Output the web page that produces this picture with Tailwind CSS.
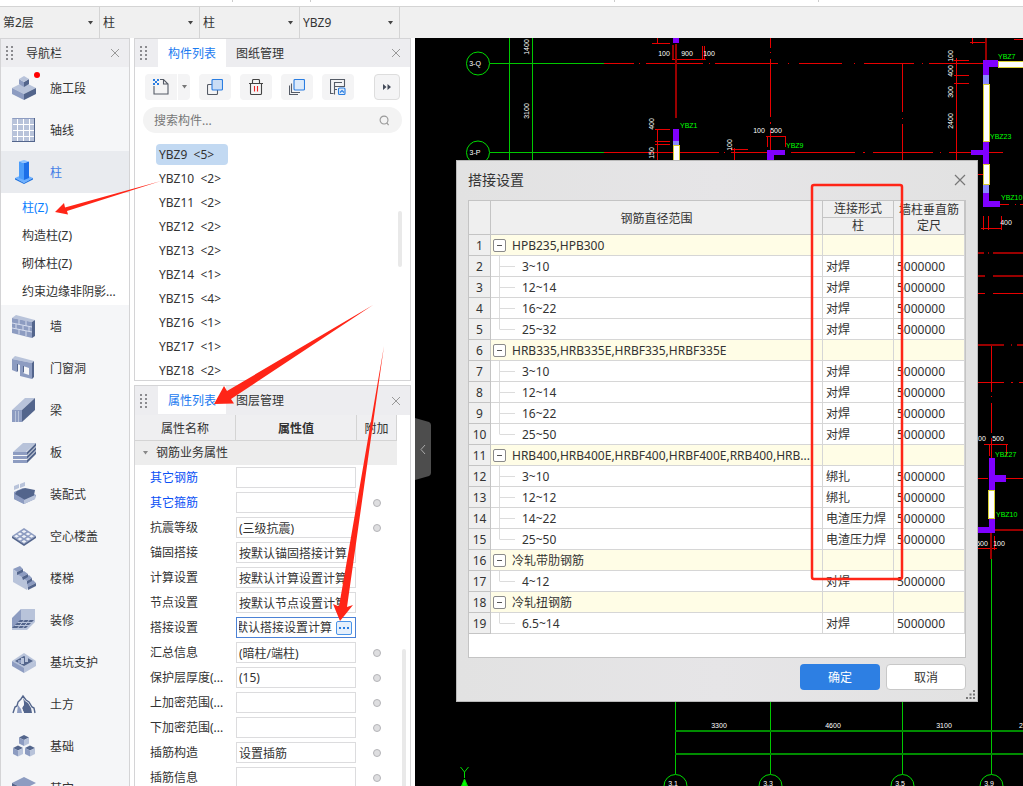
<!DOCTYPE html>
<html lang="zh-CN">
<head>
<meta charset="utf-8">
<title>搭接设置</title>
<script src="https://cdn.jsdelivr.net/npm/@tailwindcss/browser@4"></script>
</head>
<body class="relative flex h-screen flex-col overflow-hidden bg-white font-['Noto_Sans','Noto_Sans_CJK_SC',sans-serif] text-xs leading-5 text-[#333]">

<div class="flex h-1.5 shrink-0">
  <div class="h-0.5 w-[233px] border-r border-[#ccc]"></div>
  <div class="h-0.5 w-[78px] border-r border-[#ccc]"></div>
  <div class="h-0.5 w-[304px] border-r border-[#ccc]"></div>
  <div class="h-0.5 w-[204px] border-r border-[#ccc]"></div>
</div>
<form id="filters" class="flex h-8 shrink-0 border-t border-[#d4d4d4] bg-[#f0f0f0]"></form>

<div class="flex min-h-0 flex-1">
  <nav class="flex w-[130px] shrink-0 flex-col overflow-hidden border border-b-0 border-[#d4d4d6] bg-[#f5f6f8]">
    <header class="flex h-7 shrink-0 items-center bg-[#ededf0] pl-[5px]">
      <svg class="h-4 w-2" viewBox="0 0 8 16" fill="#8b8b8f"><path d="M0 1h2v2H0zM5 1h2v2H5zM0 5h2v2H0zM5 5h2v2H5zM0 9h2v2H0zM5 9h2v2H5zM0 13h2v2H0zM5 13h2v2H5z"/></svg>
      <h2 class="ml-3 flex-1 pt-0.5">导航栏</h2>
      <button type="button" aria-label="关闭导航栏" class="mr-[9px]"><svg class="h-2.5 w-2.5" viewBox="0 0 10 10" fill="none" stroke="#999"><path d="M1 1l8 8M9 1L1 9"/></svg></button>
    </header>
    <ul id="nav"></ul>
  </nav>

  <div class="ml-1 flex w-[277px] shrink-0 flex-col gap-1">
    <section class="flex h-[343px] shrink-0 flex-col overflow-hidden border border-[#d4d4d6]">
      <header class="flex h-7 shrink-0 items-stretch bg-[#ededf0] pl-[5px]">
        <svg class="mr-2.5 h-4 w-2 self-center" viewBox="0 0 8 16" fill="#8b8b8f"><path d="M0 1h2v2H0zM5 1h2v2H5zM0 5h2v2H0zM5 5h2v2H5zM0 9h2v2H0zM5 9h2v2H5zM0 13h2v2H0zM5 13h2v2H5z"/></svg>
        <button type="button" class="w-[68px] bg-white pt-0.5 text-[#1a7af0]">构件列表</button>
        <button type="button" class="w-[68px] pt-0.5">图纸管理</button>
        <button type="button" aria-label="关闭构件列表" class="mr-[9px] ml-auto"><svg class="h-2.5 w-2.5" viewBox="0 0 10 10" fill="none" stroke="#999"><path d="M1 1l8 8M9 1L1 9"/></svg></button>
      </header>
      <div class="mt-[7px] flex h-[26px] shrink-0 pl-2.5">
        <button type="button" aria-label="新建" class="flex w-8 items-center justify-center rounded-l bg-[#f4f4f5]"><svg class="h-[18px] w-[18px]" viewBox="0 0 18 18" fill="none" stroke="#555b66" stroke-width="1.100"><path d="M2 8v8h14V6l-4.500-4.500H8M11.500 1.500V6H16"/><path d="M1 1h2v2H1zM5 1h2v2H5zM3 3h2v2H3zM1 5h2v2H1zM5 5h2v2H5z" fill="#2a7de1" stroke="none"/></svg></button>
        <button type="button" aria-label="新建菜单" class="ml-px flex w-3 items-center justify-center rounded-r bg-[#f4f4f5]"><svg class="h-1 w-[5px]" viewBox="0 0 5 4" fill="#777"><path d="M0 0h5L2.500 3.500z"/></svg></button>
        <button type="button" aria-label="复制" class="ml-[9px] flex w-8 items-center justify-center rounded bg-[#f4f4f5]"><svg class="h-4 w-4" viewBox="0 0 16 16" stroke-width="1.100"><path d="M5 5.500H1.500q-1 0-1 1v8q0 1 1 1h8q1 0 1-1V11" fill="none" stroke="#555b66"/><rect x="5" y=".5" width="10.500" height="10.500" rx="1" fill="#c9ddf5" stroke="#2a7de1"/></svg></button>
        <button type="button" aria-label="删除" class="ml-[9px] flex w-8 items-center justify-center rounded bg-[#f4f4f5]"><svg class="h-4 w-4" viewBox="0 0 16 16" fill="none" stroke="#444" stroke-width="1.100"><path d="M1 4.500h14M4.500 4.500V1.500q0-1 1-1h5q1 0 1 1v3M2.500 4.500v10q0 1 1 1h9q1 0 1-1v-10"/><path d="M6.500 7v5.500M9.500 7v5.500" stroke="#e22"/></svg></button>
        <button type="button" aria-label="层间复制" class="ml-[9px] flex w-8 items-center justify-center rounded bg-[#f4f4f5]"><svg class="h-4 w-4" viewBox="0 0 16 16" fill="none" stroke="#555b66" stroke-width="1.100"><path d="M.500 6.500v9H9M2.500 4.500v9H11"/><rect x="5" y=".5" width="10.500" height="10.500" rx="1" fill="#dceafa" stroke="#2a7de1"/></svg></button>
        <button type="button" aria-label="存档" class="ml-[9px] flex w-8 items-center justify-center rounded bg-[#f4f4f5]"><svg class="h-4 w-4" viewBox="0 0 16 16" fill="none" stroke="#555b66" stroke-width="1.100"><path d="M3.500 14.500H.500V.500h14v7h-10v-4H12M4.500 7.500v8M4.500 10.500H7"/><rect x="8.500" y="9" width="6.500" height="6.500" rx="1" fill="#dceafa" stroke="#2a7de1"/><path d="M10 13.500l2-2 2 2" stroke="#2a7de1"/></svg></button>
        <button type="button" aria-label="更多" class="mr-2.5 ml-auto flex w-[26px] items-center justify-center rounded border border-[#ddd] bg-[#f4f4f5]"><svg class="h-1.5 w-2" viewBox="0 0 8 6" fill="#444b5a"><path d="M0 0l3.500 3L0 6zM4.500 0L8 3 4.500 6z"/></svg></button>
      </div>
      <label class="mx-2 mt-[7px] flex h-[26px] shrink-0 items-center rounded-full bg-[#f3f3f3] pr-3 pl-[11px]">
        <input type="search" aria-label="搜索构件" placeholder="搜索构件..." class="min-w-0 flex-1 bg-transparent pt-0.5 outline-none placeholder:text-[#777]">
        <svg class="h-[11px] w-[11px]" viewBox="0 0 12 12" fill="none" stroke="#999" stroke-width="1.200"><circle cx="5.500" cy="5.500" r="4.300"/><path d="M8.500 8.500l2 2.500"/></svg>
      </label>
      <div class="mt-[9px] flex min-h-0 flex-1 overflow-hidden">
        <ul id="parts" class="flex-1 pl-[21px]"></ul>
        <div class="mt-[69px] mr-2 h-14 w-1 rounded-full bg-[#e9e9e9]"></div>
      </div>
    </section>

    <section class="flex min-h-0 flex-1 flex-col overflow-hidden border border-b-0 border-[#d4d4d6]">
      <header class="flex h-[29px] shrink-0 items-stretch bg-[#ededf0] pl-[5px]">
        <svg class="mr-2.5 h-4 w-2 self-center" viewBox="0 0 8 16" fill="#8b8b8f"><path d="M0 1h2v2H0zM5 1h2v2H5zM0 5h2v2H0zM5 5h2v2H5zM0 9h2v2H0zM5 9h2v2H5zM0 13h2v2H0zM5 13h2v2H5z"/></svg>
        <button type="button" class="mb-px w-[68px] bg-white pt-0.5 text-[#1a7af0]">属性列表</button>
        <button type="button" class="w-[68px]">图层管理</button>
        <button type="button" aria-label="关闭属性列表" class="mr-[9px] ml-auto"><svg class="h-2.5 w-2.5" viewBox="0 0 10 10" fill="none" stroke="#999"><path d="M1 1l8 8M9 1L1 9"/></svg></button>
      </header>
      <div class="flex min-h-0 flex-1 overflow-hidden">
        <table class="w-[262px] shrink-0 table-fixed border-separate border-spacing-0 self-start">
          <colgroup><col class="w-[101px]"><col class="w-[121px]"><col class="w-10"></colgroup>
          <thead><tr class="h-[26px] bg-[#efeff1]">
            <th class="border-r border-b border-[#d4d4d4] p-0 pt-0.5 font-normal">属性名称</th>
            <th class="border-r border-b border-[#d4d4d4] p-0 pt-0.5 font-bold">属性值</th>
            <th class="border-r border-b border-[#d4d4d4] p-0 pt-0.5 font-normal">附加</th></tr></thead>
          <tbody id="props"></tbody>
        </table>
        <div class="mt-[234px] ml-[5px] w-1 rounded-t-full bg-[#e9e9e9]"></div>
      </div>
    </section>
  </div>

  <main class="relative ml-1 min-w-0 flex-1 overflow-hidden bg-black">
    <svg class="h-full w-full font-['Liberation_Sans',sans-serif] text-[7px]" shape-rendering="crispEdges">
      <g transform="translate(-415 -38)" fill="none">
        <g stroke="#00c800">
          <path d="M490 63.500h114M490 152.500h114M509.500 38v124M532.500 38v124M675.500 700v74M770.500 700v74M902.500 700v74M991.500 559v215"/>
          <path d="M675 731h348M675 754h348" stroke="#008c00" stroke-width="2"/>
          <g shape-rendering="auto" stroke="#00dc00"><circle cx="478" cy="63.500" r="11.500"/><circle cx="478" cy="152.500" r="11.500"/><circle cx="675.500" cy="786" r="11.500"/><circle cx="770.500" cy="786" r="11.500"/><circle cx="902.500" cy="786" r="11.500"/><circle cx="991.500" cy="786" r="11.500"/>
          <path d="M460.500 767l4 5 4-5M464.500 772v6"/><path d="M464.500 779l3 7h-6z" fill="#00ff00"/></g>
        </g>
        <g stroke="#e80000">
          <path d="M604 63.500h30m5 0h1m6 0h57m6 0h1m5 0h63m10 0h1m10 0h43m12 0h1m9 0h50m8 0h1m6 0h54M604 152.500h115m5 0h1m6 0h50m10 0h64m8 0h2m8 0h60m7 0h1m8 0h54"/>
          <path d="M770.500 38v10m0 4v1m0 6v58m0 5v2m0 6v20M902.500 64v48m0 6v1m0 5v36M956.500 58v102"/>
          <path d="M657.500 38v6M652 43.500h18M672 59.500h34M673.500 46v14M702.500 46v14M704.500 46v14M657.500 129v31M655 129.500h15M655 141.500h15M655 144.500h15"/>
          <path d="M766 136.500h20M767.500 136v11M785.500 136v11M734.500 148v12M731 149.500h17M954 60.500h15M954 75.500h15M954 83.500h15M970 42.500h16M1014 39.500h9M972 38v6M978 174.500h5"/>
          <path d="M981 228.500h21M983.500 216v14M988.500 216v14M1001.500 216v14M1000 204.500h9m6 0h1m4 0h3"/>
          <path d="M978 293.500h7m8 0h30M978 382.500h26m7 0h2m6 0h4M991.500 345v47m0 4v1m0 6v30m0 5v20M984 444.500h24M989.500 444v12M1006.500 444v12M978 478.500h10M1006 478.500h17M978 548.500h19M994.500 536v14"/>
        </g>
        <g stroke="#990000" stroke-width="2">
          <path d="M676 44v74M673 45v14M986 38v22M991 533v26M978 253h6m4 0h1m4 0h30M978 276h7m8 0h30M978 345h26m7 0h1m5 0h6M995 530h28"/>
        </g>
        <g stroke="none">
          <path fill="#8000ff" d="M673 38h6v5h-6zM673 129h6v12h-6zM767 150h18v5h-11v6h-7zM983 60h15v7h-9v8h-6zM983 141h6v23h-6v-9h-12v-5h12zM983 193h6v8h11v6h-17zM989 458h6v17h11v7h-11v8h-6zM989 518h6v15h-17v-6h11z"/>
          <path fill="#8888ff" d="M673 141h6v4h-6zM983 75h6v9h-6zM983 184h6v9h-6z"/>
          <path fill="#fff" stroke="#d8d030" stroke-width="1" d="M673 145h6v16h-6zM983 84h6v57h-6zM983 164h6v20h-6zM998 61h26v6h-26zM988 490h6v28h-6z"/>
        </g>
        <g fill="#00ff00"><text x="680" y="128">YBZ1</text><text x="786" y="148">YBZ9</text><text x="998" y="59">YBZ7</text><text x="990" y="139">YBZ23</text><text x="1001" y="200">YBZ10</text><text x="995" y="457">YBZ27</text><text x="996" y="517">YBZ10</text></g>
        <g fill="#fff" text-anchor="middle">
          <text x="475" y="66">3-Q</text><text x="475" y="155">3-P</text>
          <text x="664" y="56">100</text><text x="687" y="56">900</text><text x="709" y="56">100</text>
          <text x="759" y="133">100</text><text x="776" y="133">500</text><text x="1006" y="225">400</text><text x="980" y="441">100</text><text x="998" y="441">500</text><text x="982" y="546">500</text><text x="999" y="546">100</text>
          <text x="719" y="728">3300</text><text x="833" y="728">4600</text><text x="944" y="728">3100</text><text x="1021" y="728">2</text>
          <text x="673" y="786">3.1</text><text x="768" y="786">3.3</text><text x="900" y="786">3.5</text><text x="989" y="786">3.9</text>
          <g transform="rotate(-90)"><text x="-47" y="529">1400</text><text x="-111" y="529">3100</text><text x="-124" y="654">400</text><text x="-153" y="654">150</text><text x="-145" y="732">100</text><text x="-56" y="953">100</text><text x="-71" y="953">400</text><text x="-92" y="953">300</text><text x="-121" y="953">2400</text></g>
        </g>
      </g>
    </svg>
    <button type="button" aria-label="收起面板" class="absolute top-[380px] left-0"><svg class="h-[62px] w-4" viewBox="0 0 16 62"><path d="M0 0l14 4q2 1 2 3v48q0 2-2 3L0 62z" fill="#4d4d4d"/><path d="M10 27l-4 4.500 4 4.500" fill="none" stroke="#aaa"/></svg></button>

    <section role="dialog" aria-labelledby="dlg-title" class="absolute top-[122px] left-[41px] flex h-[542px] w-[522px] flex-col border border-[#b9b9b9] bg-[#e3e3e3] bg-linear-to-r from-[#e2e2e2] via-[#e6e5e7] to-[#e2e2e2] px-[11px]">
      <header class="flex h-[39px] shrink-0 items-center justify-between pb-0.5">
        <h1 id="dlg-title" class="text-sm">搭接设置</h1>
        <button type="button" aria-label="关闭"><svg class="h-3 w-3" viewBox="0 0 12 12" fill="none" stroke="#777" stroke-width="1.200"><path d="M1 1l10 10M11 1L1 11"/></svg></button>
      </header>
      <div class="h-[458px] overflow-hidden border border-[#c4c4c4] bg-white">
        <table class="w-full table-fixed border-separate border-spacing-0 leading-4">
          <colgroup><col class="w-[22px]"><col><col class="w-[71px]"><col class="w-[71px]"></colgroup>
          <thead class="bg-[#efefef]">
            <tr class="h-[17px]"><th rowspan="2" class="border-r border-b border-[#c4c4c4] p-0"></th><th rowspan="2" class="border-r border-b border-[#c4c4c4] p-0 pt-0.5 font-normal">钢筋直径范围</th><th class="border-r border-b border-[#c4c4c4] p-0 font-normal">连接形式</th><th rowspan="2" class="border-r border-b border-[#c4c4c4] p-0 font-normal">墙柱垂直筋<br>定尺</th></tr>
            <tr class="h-[17px]"><th class="border-r border-b border-[#c4c4c4] p-0 font-normal">柱</th></tr>
          </thead>
          <tbody id="laps"></tbody>
        </table>
      </div>
      <footer class="mt-1.5 flex justify-end gap-1.5">
        <button type="button" class="h-[26px] w-20 rounded-sm bg-[#2d7fe3] pt-0.5 text-white">确定</button>
        <button type="button" class="h-[26px] w-20 rounded-sm border border-[#c8c8c8] bg-white pt-0.5">取消</button>
      </footer>
      <svg class="absolute right-0.5 bottom-0.5 h-[9px] w-[9px]" viewBox="0 0 9 9" fill="#777"><path d="M7 0h2v2H7zM7 3.500h2v2H7zM7 7h2v2H7zM3.500 3.500h2v2h-2zM3.500 7h2v2h-2zM0 7h2v2H0z"/></svg>
    </section>
  </main>
</div>

<svg class="pointer-events-none absolute inset-0 h-full w-full" fill="#ff2517">
  <path d="M55 212l9-9 1 4.500L161 181 67 211l1 3.500z"/>
  <path d="M214 404l10-18 3 5L373 305 231 399l3 4.500z"/>
  <path d="M340 621l-7-17 6 2.500L384 346 347 607l6-2z"/>
  <rect x="812" y="185" width="90" height="394" rx="2" fill="none" stroke="#ff2517" stroke-width="2.500"/>
</svg>

<script>
const byId = id => document.getElementById(id);

byId('filters').innerHTML = [['楼层','第2层'],['构件类别','柱'],['构件类型','柱'],['构件名称','YBZ9']].map(([n, v]) => `
  <div class="relative w-[100px] border-r border-[#d4d4d4]">
    <select aria-label="${n}" class="h-full w-full appearance-none bg-transparent pl-[3px]"><option>${v}</option></select>
    <svg class="pointer-events-none absolute top-3.5 right-1.5 h-1 w-[5px]" viewBox="0 0 5 4" fill="#444"><path d="M0 0h5L2.500 3.500z"/></svg>
  </div>`).join('');

const L = '#b8c3da', M = '#8d9cc1', D = '#53658c';
const p = (f, d) => `<path fill="${f}" d="${d}"/>`;
const ln = (s, d, w = 1) => `<path fill="none" stroke="${s}" stroke-width="${w}" d="${d}"/>`;
const cube = (x, y) => p(D, `M${x} ${y}l5-2.500 5 2.500-5 2.500z`) + p(M, `M${x} ${y}l5 2.500v6l-5-2.500z`) + p(L, `M${x+10} ${y}l-5 2.500v6l5-2.500z`);
const nav = [
  ['施工段', p(L,'M0 12l12-6 12 6-12 6z')+p(M,'M0 12l12 6v6L0 18z')+p(D,'M24 12l-12 6v6l12-6z')+p(M,'M7 3v5l5 3V6z')+p(D,'M17 3v5l-5 3V6z')+p(L,'M7 3l5-3 5 3-5 3z'), 1],
  ['轴线', p(L,'M0 0h23v24H0z')+ln(M,'M.500.500h22')+ln(D,'M22.500 0v24M0 23.500h23')+ln('#fff','M5.500 1v22M11.500 1v22M17.500 1v22M1 6.500h21M1 12.500h21M1 18.500h21')],
  ['柱', p('#6fb1ff','M3 18l9-4 9 4-9 5z')+p('#1c72e0','M3 18l9 5 9-5v1.500L12 24l-9-4.500z')+p('#4c9dfa','M7 1.500l5 1.500v17l-5-2z')+p('#1c6fe8','M12 3l5-1.500V18l-5 2z')+p('#8cc2ff','M7 1.500L12 0l5 1.500L12 3z')],
  ['墙', p(L,'M0 4l4-3 19 5-3 2z')+p(M,'M0 4l20 4v16L0 19z')+p(D,'M20 8l3-2v16l-3 2z')+ln('#d5dced','M0 9l20 4M0 14l20 4M7 5.500v5M14 7v5M4 10v5M11 11.500v5M17 12.500v5M7 15.500v5M14 17v5')],
  ['门窗洞', p(L,'M0 3l3-3 19 5-2 2z')+`<path fill="${M}" fill-rule="evenodd" d="M0 3l20 4v16L8 20V9L5 8v8l-5-2zM11 10v7l6 2v-7z"/>`+p(D,'M20 7l2-2v16l-2 2zM5 8h1v7l-1 1zM11 10h1v6l-1 1z')],
  ['梁', p(L,'M0 12L13 0h10L10 12z')+p(M,'M0 12h10v12H0z')+p(D,'M10 12L23 0v12L10 24z')+ln(L,'M3.500 13v11M6.500 13v11')],
  ['板', p(L,'M1 12l10-9h13l-10 9z')+p(M,'M1 12h14v3H1zM1 16h14v3H1zM1 20h14v3H1z')+p(D,'M15 12l9-9v3l-9 9zM15 16l9-9v3l-9 9zM15 20l9-9v3l-9 9z')],
  ['装配式', p(M,'M2 10l9-4 13 7-1 4-11 5L2 17z')+p(D,'M5 9l8-3 10 2-1 5 1 1-10 4L3 12z')+p(L,'M2 4l5-2v4L2 8zM8 2l5-2v4L8 6zM12 18l11-5v4l-11 5z')+p(M,'M2 12l10 6v4L2 17z')],
  ['空心楼盖', p(M,'M0 12L12 4l12 8-12 8z')+p(D,'M0 12l12 8 12-8v2l-12 8L0 14z')+p('#eef1f7','M12 6l2.500 1.500L12 9 9.500 7.500zM8 8.500l2.500 1.500L8 11.500 5.500 10zM16 8.500l2.500 1.500-2.500 1.500-2.500-1.500zM4.500 10.800L7 12.300l-2.500 1.500L2 12.300zM12 11l2.500 1.500L12 14l-2.500-1.500zM19.500 10.800l2.500 1.500-2.500 1.500-2.500-1.500zM8 13.500l2.500 1.500L8 16.500 5.500 15zM16 13.500l2.500 1.500-2.500 1.500-2.500-1.500zM12 16l2.500 1.500L12 19l-2.500-1.500z')],
  ['楼梯', p(L,'M1 3v13l14 8 2-4V16z')+p(M,'M1 3l7-3 3 3-6 3zM5 8l7-3 4 3-6 3zM11 12l6-3 3 3-5 3zM15 17l6-3 3 3-8 4z')+p(D,'M5 6l6-3v3l-6 3zM10 11l6-3v3l-5 3zM15 15l5-3v3l-5 3zM16 21l8-4v3l-8 4z')],
  ['装修', p(L,'M9 1h14v11H9z')+p(M,'M0 10l9-9v11l-9 9z')+p(L,'M0 21l9-9h14v2l-8 8H0z')+p(D,'M8 12h14l-2 2H6zM5 15h14l-2 2H3zM2 18h14l-2 2H0z')+ln(L,'M13 11l-8 10M18 11l-8 10')],
  ['基坑支护', p(L,'M0 11l12-8 12 8-12 8z')+p(D,'M3 11l9-5 9 5-9 5z')+p(M,'M0 11l12 7v5L0 16z')+p(L,'M24 11l-12 7v5l12-7zM9 8h3v6H9zM13 6h3v6h-3z')+p(M,'M6 10h3v3H6z')],
  ['土方', ln(D,'M1 21l2-6 2-1 1-4 3-3 2-3 3 4 3 2 3 5 2 1 1 5',1.4)+p(D,'M11 6l2 3 3 2 3 5 1 5h-8l-2-5 2-3z')+p('#f5f6f8','M11 6l1 6-2 4 2 5h-2l-2-6z')+p(M,'M6 13l3 4 1 4H5z')],
  ['基础', cube(7,3.5)+cube(1,14)+cube(13,14)],
  ['其它', p(M,'M0 7l12-6 12 6-12 6z')+p(D,'M0 7l12 6v5L0 12z')],
];
byId('nav').innerHTML = nav.map(([t, g, dot]) => {
  const on = t === '柱';
  const item = `<li><a href="#" class="flex h-[42px] items-center pl-[11px] ${on ? 'bg-[#e9ebef] text-[#3e7be6]' : ''}"><span class="relative"><svg class="h-6 w-6" viewBox="0 0 24 24">${g}</svg>${dot ? '<i class="absolute -top-1 -right-1 h-1.5 w-1.5 rounded-full bg-[#f00]"></i>' : ''}</span><span class="ml-3.5 pt-0.5">${t}</span></a></li>`;
  return !on ? item : item + '<li><ul class="bg-white">' + ['柱(Z)','构造柱(Z)','砌体柱(Z)','约束边缘非阴影...'].map((s, i) => `<li><a href="#" class="flex h-7 items-center pt-0.5 pl-[21px] whitespace-nowrap ${i ? '' : 'text-[#0a80ff]'}">${s}</a></li>`).join('') + '</ul></li>';
}).join('');

byId('parts').innerHTML = [[9,5],[10,2],[11,2],[12,2],[13,2],[14,1],[15,4],[16,1],[17,1],[18,2]].map(([n, c], i) =>
  `<li class="h-6 pt-0.5"><a href="#" class="inline-block h-[21px] w-[72px] rounded-sm pl-[3px] leading-[21px] whitespace-pre ${i ? '' : 'bg-[#c2d9f2]'}">YBZ${n}  &lt;${c}&gt;</a></li>`).join('');

const props = [['其它钢筋','',0,1],['其它箍筋','',1,1],['抗震等级','(三级抗震)',1],['锚固搭接','按默认锚固搭接计算'],['计算设置','按默认计算设置计算'],['节点设置','按默认节点设置计算'],['搭接设置','按默认搭接设置计算'],['汇总信息','(暗柱/端柱)',1],['保护层厚度(...','(15)',1],['上加密范围(...','',1],['下加密范围(...','',1],['插筋构造','设置插筋',1],['插筋信息','',1]];
byId('props').innerHTML = `<tr class="h-6 bg-[#ededed]"><td colspan="3" class="p-0"><button type="button" class="flex items-center pl-2"><svg class="mr-2 h-1 w-[5px]" viewBox="0 0 5 4" fill="#888"><path d="M0 0h5L2.500 3.500z"/></svg>钢筋业务属性</button></td></tr>` +
  props.map(([n, v, c, blue], i) => `<tr class="h-[25px]">
    <td class="p-0 pl-[15px] whitespace-nowrap ${blue ? 'text-[#0a50f5]' : ''}"><label for="p${i}">${n}</label></td>
    <td class="p-0">${n === '搭接设置'
      ? `<div class="flex h-[21px] w-[120px] items-center border border-[#4c82d6] pr-[3px] pl-0.5"><div class="flex min-w-0 flex-1 justify-end overflow-hidden"><input id="p${i}" value="${v}" class="w-[108px] shrink-0 leading-[18px] outline-none"></div><button type="button" aria-label="打开搭接设置" class="ml-1 flex h-3.5 w-4 items-center justify-center rounded-xs border border-[#4a94e8] bg-[#e6f0fc]"><svg class="h-0.5 w-2.5" viewBox="0 0 10 2" fill="#2a7de1"><path d="M0 0h2v2H0zM4 0h2v2H4zM8 0h2v2H8z"/></svg></button></div>`
      : `<input id="p${i}" value="${v}" class="block h-[21px] w-[120px] border border-[#dcdcde] pl-0.5 outline-none">`}</td>
    <td class="p-0"><input type="checkbox" aria-label="${n} 附加" class="mx-auto block h-2 w-2 appearance-none rounded-full border border-[#b4b4b8] bg-[#dedee0] ${c ? '' : 'invisible'}"></td></tr>`).join('');

const groups = [
  ['HPB235,HPB300', [['3~10','对焊'],['12~14','对焊'],['16~22','对焊'],['25~32','对焊']]],
  ['HRB335,HRB335E,HRBF335,HRBF335E', [['3~10','对焊'],['12~14','对焊'],['16~22','对焊'],['25~50','对焊']]],
  ['HRB400,HRB400E,HRBF400,HRBF400E,RRB400,HRB...', [['3~10','绑扎'],['12~12','绑扎'],['14~22','电渣压力焊'],['25~50','电渣压力焊']]],
  ['冷轧带肋钢筋', [['4~12','对焊']]],
  ['冷轧扭钢筋', [['6.5~14','对焊']]],
];
let row = 0;
const lapRow = (first, joint, len, head) => `<tr class="h-[21px] ${head ? 'bg-[#fffde6]' : ''}"><th scope="row" class="border-r border-b border-[#c4c4c4] bg-[#efefef] p-0 pt-0.5 font-normal">${++row}</th><td class="border-r border-b border-[#d6d6d6] p-0"><div class="flex h-5 items-center whitespace-nowrap">${first}</div></td><td class="border-r border-b border-[#d6d6d6] p-0 pt-0.5 pl-[3px] whitespace-nowrap">${joint}</td><td class="border-r border-b border-[#d6d6d6] p-0 pt-0.5 pl-[3px]">${len}</td></tr>`;
byId('laps').innerHTML = groups.map(([g, kids]) =>
  lapRow(`<button type="button" aria-label="折叠" class="mr-1.5 ml-0.5 flex h-[13px] w-[13px] shrink-0 items-center justify-center rounded-xs border border-[#8a8a8a] bg-white"><i class="h-px w-[5px] bg-[#555]"></i></button><span class="pt-0.5">${g}</span>`, '', '', true) +
  kids.map(([d, j], i) => lapRow(`<svg class="mr-[7px] ml-2 h-5 w-4 shrink-0" viewBox="0 0 16 20" fill="none" stroke="#dcdcdc"><path d="${i === kids.length - 1 ? 'M.5 0V10' : 'M.5 0V20'}M.5 10.500H16"/></svg><span class="pt-0.5">${d}</span>`, j, '5000000')).join('')
).join('');
</script>
</body>
</html>
